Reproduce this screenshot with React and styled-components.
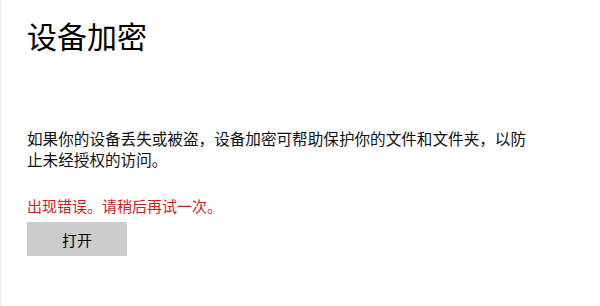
import React from 'react';
import styled, { createGlobalStyle } from 'styled-components';

const GlobalStyle = createGlobalStyle`
  html, body {
    margin: 0;
    padding: 0;
    background: #ffffff;
  }
  body {
    font-family: "Noto Sans CJK SC", "Noto Sans", sans-serif;
    color: #000000;
  }
`;

const Page = styled.div`
  box-sizing: border-box;
  width: 600px;
  height: 306px;
  padding: 15px 0 0 25px;
  border-left: 2px solid #f4f4f4;
  display: flex;
  flex-direction: column;
  align-items: flex-start;
`;

const Title = styled.h1`
  margin: 0;
  font-size: 30px;
  line-height: 40px;
  font-weight: 400;
`;

const Description = styled.p`
  margin: 73px 0 0;
  width: 506px;
  font-size: 15.6px;
  line-height: 21px;
  color: #111111;
`;

const ErrorText = styled.div`
  margin-top: 26px;
  font-size: 15px;
  line-height: 20px;
  color: #d01c1c;
`;

const Button = styled.button`
  margin-top: 6px;
  width: 100px;
  height: 34px;
  border: none;
  background: #cccccc;
  font-family: inherit;
  font-size: 15px;
  color: #000000;
  padding: 0;
`;

export default function App() {
  return (
    <>
      <GlobalStyle />
      <Page>
        <Title>设备加密</Title>
        <Description>
          如果你的设备丢失或被盗，设备加密可帮助保护你的文件和文件夹，以防止未经授权的访问。
        </Description>
        <ErrorText>出现错误。请稍后再试一次。</ErrorText>
        <Button>打开</Button>
      </Page>
    </>
  );
}
